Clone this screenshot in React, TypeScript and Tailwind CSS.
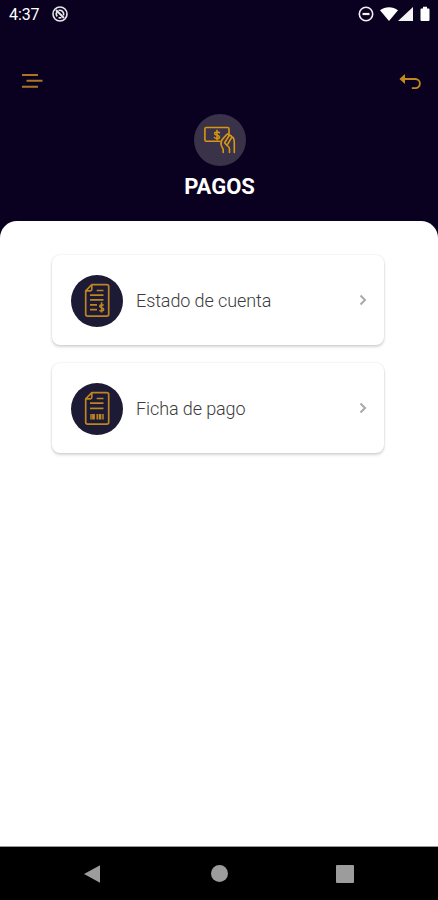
import { ReactNode } from "react"

interface MenuCardProps {
    label: string
    icon: ReactNode
}

const StatusBar = () => {
    return (
        <div className="flex h-7 items-center justify-between pl-[9px] pr-2 text-white">
            <div className="flex items-center gap-3">
                <span className="w-[31px] pt-px text-[16px] leading-7 tracking-[-0.1px]">4:37</span>
                <svg width="16" height="16" viewBox="0 0 16 16" fill="none" stroke="#e8e8ea">
                    <circle cx="8" cy="8" r="7" strokeWidth="1.6" />
                    <path d="M5.2 10.5a4 4 0 0 1 0-5M6.5 4.4a4 4 0 0 1 5 5M9.5 11.6a4 4 0 0 1-3 0" strokeWidth="1.6" />
                    <path d="M4 4l8 8" strokeWidth="2" />
                </svg>
            </div>
            <div className="flex items-center">
                <svg width="16" height="16" viewBox="0 0 16 16" fill="none" stroke="#f1f1f3">
                    <circle cx="8" cy="8" r="6.7" strokeWidth="1.6" />
                    <path d="M4.5 8h7" strokeWidth="2.2" />
                </svg>
                <svg className="ml-[6px]" width="18" height="16" viewBox="0 0 18 16" fill="#fff">
                    <path d="M0 4.2C5.2.2 12.8.2 18 4.2L9 15z" />
                </svg>
                <svg width="15" height="16" viewBox="0 0 15 16" fill="#f4f4f5">
                    <path d="M0 15L15 1v14z" />
                </svg>
                <svg className="ml-[7px]" width="10" height="16" viewBox="0 0 10 16" fill="#fff">
                    <path d="M3 .8h4v1.6h1.5q1 0 1 1V14q0 1-1 1h-7q-1 0-1-1V3.4q0-1 1-1H3z" />
                </svg>
            </div>
        </div>
    )
}

const MenuIcon = () => (
    <svg width="22" height="16" viewBox="0 0 22 16" fill="none" stroke="#a87724" strokeWidth="2">
        <path d="M1 2h16M5.5 7.8h16M1 13.7h16" />
    </svg>
)

const BackIcon = () => (
    <svg width="22" height="17" viewBox="0 0 22 17" fill="none" stroke="#c4881c" strokeWidth="1.8">
        <path d="M4 6h12.3a4.6 4.6 0 0 1 0 9.2h-3.5" />
        <path d="M.4 6l5.6-5v10z" fill="#c4881c" stroke="none" />
    </svg>
)

const PaymentIcon = () => (
    <svg
        width="52"
        height="52"
        viewBox="0 0 52 52"
        fill="none"
        stroke="#d89712"
        strokeWidth="1.6"
        strokeLinecap="round"
        strokeLinejoin="round"
    >
        <path d="M26 27.3H12.4q-1.5 0-1.5-1.5V15q0-1.5 1.5-1.5h21.1q1.5 0 1.5 1.5v5.5" />
        <path d="M25.5 18.8c-.7-1.3-4.9-1.2-4.9.7 0 2.4 4.9 1 4.9 3.4 0 2.1-4.3 2.1-5.1.6M23 16.3v9.4" strokeWidth="1.5" />
        {/* wrist and thumb */}
        <path d="M29.2 38.5v-3.2l-1.9-3.8c-.8-2.5-.1-4.6 1.3-6.4l3.8-4.3c1.4-1.4 3.5-.4 2.3 1.5l-4.1 6.4 2.2 2.5" />
        {/* fingers */}
        <path d="M34.7 21.8c1.8-1 3.6.2 2.7 2l-3.6 6.4M37.6 22.9c2 .1 2.7 2.5 2.7 6.3v9.3M33.2 31.6c1.4.7 2.3 2.1 2.3 3.7v3.2" />
    </svg>
)

// Folded sheet shared by both menu entries, `children` goes on its lower part
const DocumentIcon = ({ children }: { children: ReactNode }) => (
    <svg width="52" height="52" viewBox="0 0 52 52" fill="none" stroke="#bd8420" strokeWidth="1.7" strokeLinejoin="round">
        <path d="M20.8 9.6h15q1.9 0 1.9 1.9v27.8q0 1.9-1.9 1.9H16.6q-1.9 0-1.9-1.9V15.8z" />
        <path d="M20.8 9.6v4.6q0 1.6-1.6 1.6h-4.5" />
        <path d="M25.7 15.5h6.8M19 20.2h13.5" />
        {children}
    </svg>
)

const StatementIcon = () => (
    <DocumentIcon>
        <path d="M19 24.8h13.5M19 29.8h7M19 34.6h7" />
        <path d="M32.6 30.5c-.7-1.2-3.9-1-3.9.7 0 1.9 4 1.4 4 3.4 0 1.8-3.4 1.9-4.2.6M30.6 27.3v10.3" strokeWidth="1.6" />
    </DocumentIcon>
)

const PaymentSlipIcon = () => (
    <DocumentIcon>
        <path d="M19 25.4h13.5" />
        <path d="M20 31v5.4M26.2 31v5.4M32 31v5.4" strokeWidth="1.5" />
        <path d="M22.5 31v5.4M29 31v5.4" strokeWidth="2.8" />
    </DocumentIcon>
)

const MenuCard = ({ label, icon }: MenuCardProps) => {
    return (
        <button
            className="flex h-[90px] w-full items-center rounded-lg bg-white pl-[19px] pr-[17px]
            shadow-[0_2px_3px_rgba(0,0,0,0.16),0_0_2px_rgba(0,0,0,0.12)]"
        >
            <span className="mt-px size-[52px] shrink-0 rounded-full bg-[#1c1a34]">{icon}</span>
            <span className="ml-[13px] pt-[2px] text-[18px] font-light leading-6 tracking-[-0.1px] text-[#3c3c3c]">
                {label}
            </span>
            <svg className="ml-auto" width="8" height="12" viewBox="0 0 8 12" fill="none" stroke="#a9a9a9" strokeWidth="2">
                <path d="M1.5 1.5L6 6l-4.5 4.5" />
            </svg>
        </button>
    )
}

const NavigationBar = () => {
    return (
        <div className="flex h-[54px] items-center border-t border-[#999] bg-black">
            <svg className="ml-[84px]" width="17" height="18" viewBox="0 0 17 18" fill="#9c9c9c">
                <path d="M0 9L16 0.2v17.6z" />
            </svg>
            <div className="ml-[110px] size-[17px] rounded-full bg-[#9c9c9c]" />
            <div className="ml-[108px] size-[18px] rounded-[1px] bg-[#9c9c9c]" />
        </div>
    )
}

export default function App() {
    return (
        <div className="flex h-[900px] w-[438px] flex-col overflow-hidden bg-[#0a0120] font-['Roboto',sans-serif]">
            <StatusBar />
            <header className="flex h-[193px] flex-col">
                <div className="mt-[44px] flex h-[18px] items-center justify-between pl-[21px] pr-[17px]">
                    <button><MenuIcon /></button>
                    <button><BackIcon /></button>
                </div>
                <div className="mt-6 flex flex-col items-center pl-px">
                    <div className="size-[52px] rounded-full bg-[#3a3249]">
                        <PaymentIcon />
                    </div>
                    <h1 className="mt-[7px] text-[22px] font-bold leading-[28px] text-white">PAGOS</h1>
                </div>
            </header>
            <main className="flex flex-1 flex-col gap-[18px] rounded-t-[17px] bg-white pl-[52px] pr-[54px] pt-[34px]">
                <MenuCard label="Estado de cuenta" icon={<StatementIcon />} />
                <MenuCard label="Ficha de pago" icon={<PaymentSlipIcon />} />
            </main>
            <NavigationBar />
        </div>
    )
}
